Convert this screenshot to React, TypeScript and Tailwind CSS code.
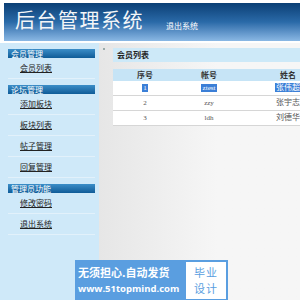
import React from 'react'

const font = { fontFamily: '"Noto Sans CJK SC", "Liberation Sans", sans-serif' }

const MENU = [
  { title: '会员管理', items: ['会员列表'] },
  { title: '论坛管理', items: ['添加板块', '板块列表', '帖子管理', '回复管理'] },
  { title: '管理员功能', items: ['修改密码', '退出系统'] },
]

const USERS = [
  { id: '1', account: 'ztest', name: '张伟超' },
  { id: '2', account: 'zzy', name: '张宇志' },
  { id: '3', account: 'ldh', name: '刘德华' },
]

export default function App() {
  return (
    <div className="relative w-[300px] h-[300px] overflow-hidden bg-white flex flex-col" style={font}>
      {/* Header */}
      <div className="h-[3px] bg-white shrink-0" />
      <div className="h-[38px] ml-[4px] shrink-0 flex items-center bg-gradient-to-b from-[#0b3f75] via-[#2a6aa8] to-[#8ab8e4]">
        <h1 className="ml-[11px] mb-[4px] text-[20px] leading-none text-[#f4f6f8] tracking-[1.5px]" style={{ fontFamily: '"Noto Sans CJK SC", serif' }}>后台管理系统</h1>
        <span className="ml-[22px] mt-[8px] text-[8px] text-white">退出系统</span>
      </div>
      <div className="h-[2px] bg-white shrink-0" />

      <div className="flex flex-1 min-h-0">
        {/* Sidebar */}
        <div className="w-[99px] shrink-0 bg-[#cfe9f9] pt-[6px]">
          {MENU.map(group => (
            <div key={group.title} className="mb-[6px]">
              <div className="ml-[8px] mr-[4px] h-[9px] flex items-center px-[3px] text-[8px] leading-none text-white bg-gradient-to-b from-[#3b8ec8] to-[#0e5c98]">
                {group.title}
              </div>
              {group.items.map(item => (
                <div key={item} className="h-[21px] ml-[8px] mr-[4px] border-b border-[#e2f1fb] flex items-center">
                  <span className="ml-[12px] text-[8px] text-[#222] underline">{item}</span>
                </div>
              ))}
            </div>
          ))}
        </div>

        {/* Main */}
        <div className="relative flex-1 bg-gradient-to-r from-[#e6e6e6] via-[#f6f6f6] to-[#f6f6f6] pl-[14px] pt-[5px]">
          <div className="absolute left-[4px] top-[5px] w-[2px] h-[2px] bg-[#9aa]" />
          <div className="h-[14px] bg-[#cde9f8] flex items-center pl-[4px] text-[8px] text-[#222] font-bold">会员列表</div>
          <div className="mt-[7px] w-[222px] bg-white">
            <div className="grid grid-cols-[64px_64px_94px] h-[12px] bg-[#c6e4f6] text-[8px] font-bold text-[#333] items-center text-center">
              <span>序号</span>
              <span>帐号</span>
              <span>姓名</span>
            </div>
            {USERS.map((u, i) => (
              <div key={u.id} className="grid grid-cols-[64px_64px_94px] h-[15px] border-b border-[#d6d6d6] text-[7px] text-[#555] items-center text-center" style={{ fontFamily: '"Liberation Serif", "Noto Sans CJK SC", serif' }}>
                <span><span className={i === 0 ? 'bg-[#3b7fd7] text-white px-[1px]' : ''}>{u.id}</span></span>
                <span><span className={i === 0 ? 'bg-[#3b7fd7] text-white px-[2px]' : ''}>{u.account}</span></span>
                <span className="text-[8px]"><span className={i === 0 ? 'bg-[#3b7fd7] text-white px-[1px]' : ''}>{u.name}</span></span>
              </div>
            ))}
          </div>
        </div>
      </div>

      {/* Watermark */}
      <div className="absolute left-[75px] top-[260px] w-[153px] h-[40px] bg-[#5a9ee0] flex items-center pl-[3px] pr-[2px]">
        <div className="flex flex-col text-white font-bold leading-none">
          <span className="text-[11px] leading-[12px]">无须担心.自动发货</span>
          <span className="text-[9.5px] leading-[11px] mt-[5px]" style={{ fontFamily: '"Open Sans", "Liberation Sans", sans-serif' }}>www.51topmind.com</span>
        </div>
        <div className="ml-auto w-[40px] h-[37px] bg-white flex flex-col items-center justify-center text-[#5a9ee0] text-[11px] leading-[16px] tracking-[1px]">
          <span>毕业</span>
          <span>设计</span>
        </div>
      </div>
    </div>
  )
}
